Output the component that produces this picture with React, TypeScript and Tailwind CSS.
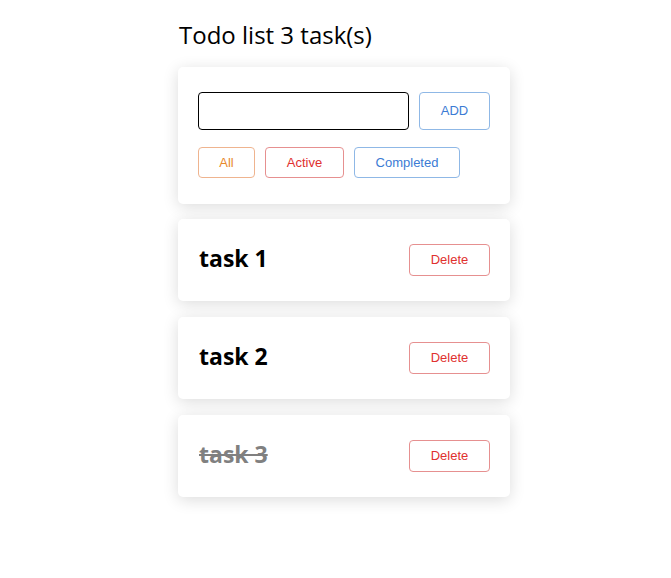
import { useState } from 'react';

type Task = { id: number; title: string; done: boolean };

const initial: Task[] = [
  { id: 1, title: 'task 1', done: false },
  { id: 2, title: 'task 2', done: false },
  { id: 3, title: 'task 3', done: true },
];

export default function App() {
  const [tasks, setTasks] = useState<Task[]>(initial);
  const [text, setText] = useState('');

  const btn = "h-[31px] rounded-[4px] border bg-white text-[13px] font-['Liberation_Sans',Arial,sans-serif]";

  return (
    <div className="min-h-screen bg-white">
      <div className="ml-[178px] w-[332px] pt-[18px] font-['Open_Sans','Noto_Sans',sans-serif]">
        {/* Header */}
        <h1 className="pl-[1px] text-[24px] leading-[34px] text-black">Todo list {tasks.length} task(s)</h1>

        {/* Form card */}
        <div className="mt-[15px] rounded-[5px] bg-white px-[20px] pt-[25px] pb-[26px] shadow-[0_3px_16px_rgba(0,0,0,0.14)]">
          <div className="flex gap-[10px]">
            <input
              value={text}
              onChange={(e) => setText(e.target.value)}
              className="h-[38px] w-[211px] rounded-[4px] border border-black px-2 outline-none"
            />
            <button
              onClick={() => {
                if (!text) return;
                setTasks([...tasks, { id: Date.now(), title: text, done: false }]);
                setText('');
              }}
              className={`${btn} h-[38px] w-[71px] border-[#8fb8e6] text-[#3b7bd4]`}
            >
              ADD
            </button>
          </div>
          <div className="mt-[17px] flex gap-[10px]">
            <button className={`${btn} w-[57px] border-[#efb48f] text-[#e8892c]`}>All</button>
            <button className={`${btn} w-[79px] border-[#e69090] text-[#e0312f]`}>Active</button>
            <button className={`${btn} w-[106px] border-[#8fb8e6] text-[#3b7bd4]`}>Completed</button>
          </div>
        </div>

        {/* Task cards */}
        <div className="mt-[15px] flex flex-col gap-[16px]">
          {tasks.map((t) => (
            <div
              key={t.id}
              className="flex h-[82px] items-center justify-between rounded-[5px] bg-white pl-[21px] pr-[20px] shadow-[0_3px_16px_rgba(0,0,0,0.14)]"
            >
              <span
                className={`-mt-[4px] text-[23px] font-bold ${t.done ? 'text-[#808080] line-through' : 'text-black'}`}
              >
                {t.title}
              </span>
              <button
                onClick={() => setTasks(tasks.filter((x) => x.id !== t.id))}
                className={`${btn} h-[32px] w-[81px] border-[#e69090] text-[#e0312f]`}
              >
                Delete
              </button>
            </div>
          ))}
        </div>
      </div>
    </div>
  );
}
